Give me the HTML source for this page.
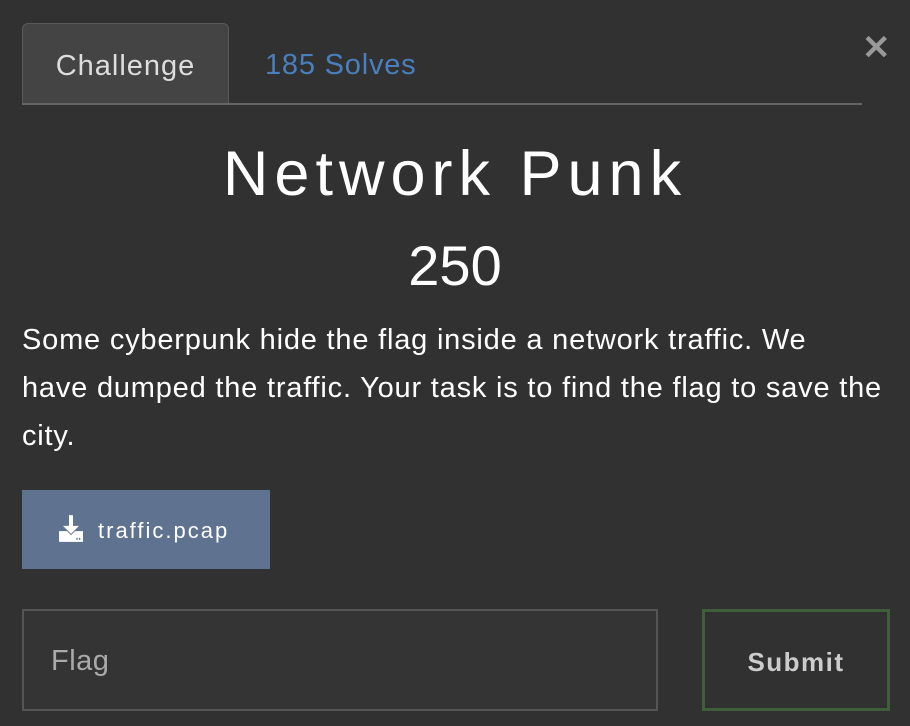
<!DOCTYPE html>
<html><head><style>
body{margin:0;width:910px;height:726px;background:#313131;font-family:"Liberation Sans",sans-serif;position:relative;overflow:hidden;color:#fff}
.tab{position:absolute;left:22px;top:23px;width:207px;height:80px;background:#444;border:1px solid #5a5a5a;border-bottom:none;border-radius:6px 6px 0 0;box-sizing:border-box;color:#ddd;font-size:29px;line-height:84px;text-align:center;letter-spacing:1px}
.solves{position:absolute;left:265px;top:49px;font-size:29px;color:#4a7fbd;letter-spacing:0.8px}
.line{position:absolute;left:22px;top:103px;width:840px;height:2px;background:#666}
.x{position:absolute;left:862px;top:28px;font-size:34px;color:#999;font-weight:bold}
h1{position:absolute;left:0;width:910px;top:138px;margin:0;text-align:center;font-weight:normal;font-size:63px;letter-spacing:6px}
.pts{position:absolute;left:0;width:910px;top:233px;text-align:center;font-size:56px}
p{position:absolute;left:22px;top:316px;width:868px;margin:0;font-size:29px;line-height:48px;letter-spacing:0.8px}
.btn{position:absolute;left:22px;top:490px;width:248px;height:79px;background:#5f7390;color:#fff;font-size:22px;line-height:82px;letter-spacing:2px}
.btn svg{position:absolute;left:37px;top:25px}
.btn span{position:absolute;left:76px}
.inp{position:absolute;left:22px;top:609px;width:636px;height:102px;border:2px solid #555;box-sizing:border-box;background:#343434;color:#aaa;font-size:29px;line-height:100px;padding-left:27px;letter-spacing:0.5px}
.sub{position:absolute;left:702px;top:609px;width:188px;height:102px;border:3px solid #3f5f3b;box-sizing:border-box;color:#ccc;font-size:26px;font-weight:bold;line-height:100px;text-align:center;letter-spacing:1.5px}
</style></head><body>
<div class="tab">Challenge</div>
<div class="solves">185 Solves</div>
<div class="line"></div>
<div class="x">✕</div>
<h1>Network Punk</h1>
<div class="pts">250</div>
<p>Some cyberpunk hide the flag inside a network traffic. We<br>have dumped the traffic. Your task is to find the flag to save the<br>city.</p>
<div class="btn"><svg width="24" height="27" viewBox="0 0 18 20"><rect x="7.5" y="0" width="3" height="9" fill="#fff"/><path d="M3 8h12l-6 6z" fill="#fff"/><path d="M0 12h6l3 3 3-3h6v8H0z" fill="#fff"/><rect x="13" y="17" width="1" height="1.5" fill="#5f7390"/><rect x="15" y="17" width="1" height="1.5" fill="#5f7390"/></svg><span>traffic.pcap</span></div>
<div class="inp">Flag</div>
<div class="sub">Submit</div>
</body></html>
